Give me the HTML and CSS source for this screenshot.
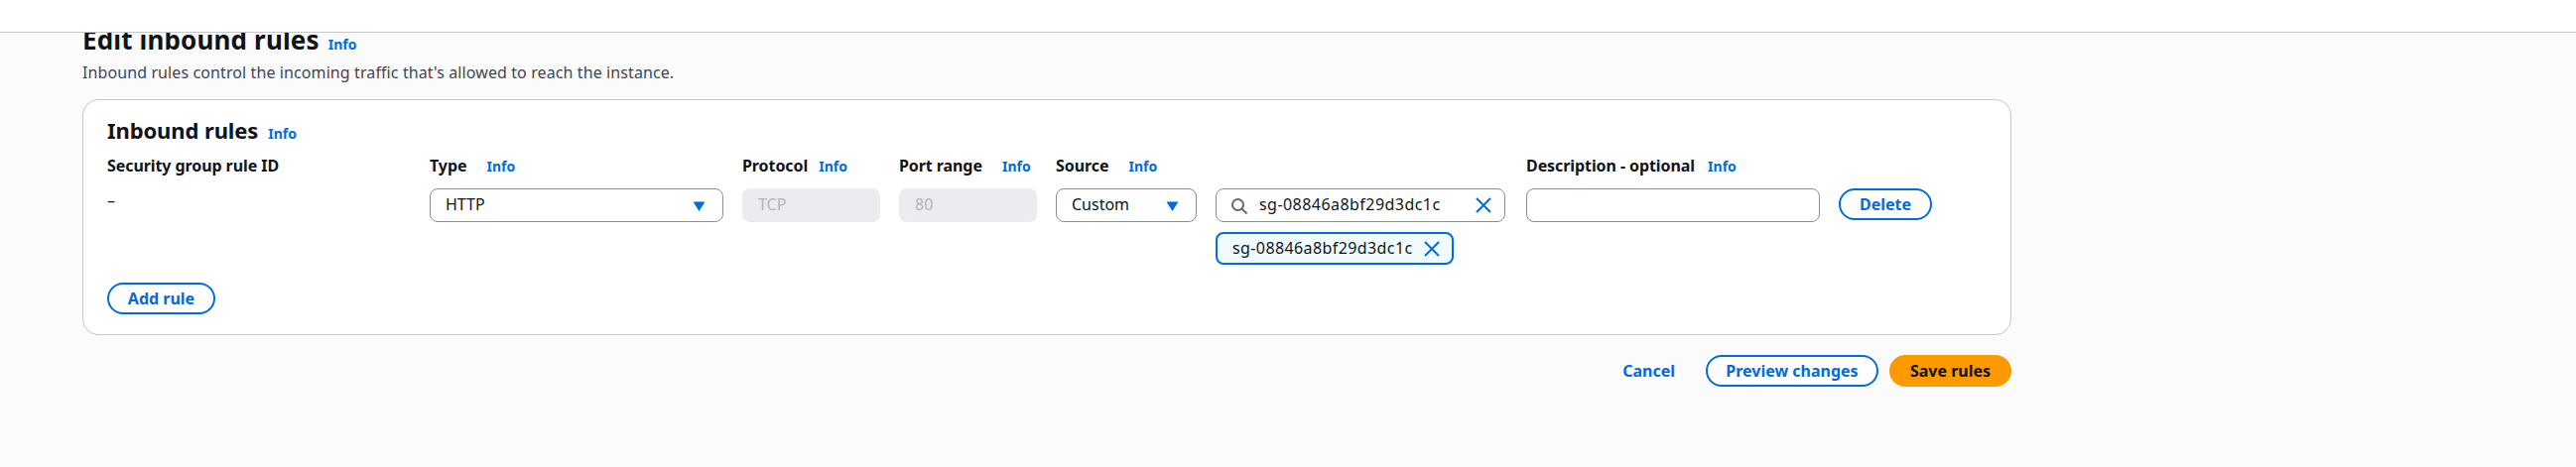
FILE: index.html
```html
<!DOCTYPE html>
<html lang="en">

<head>
    <meta charset="UTF-8">
    <meta name="viewport" content="width=device-width, initial-scale=1.0">
    <title>Edit inbound rules</title>
    <link rel="stylesheet" href="styles.css">
</head>

<body>
    <div class="topbar"></div>
    <div class="content">
        <div class="page-title">
            <h1>Edit inbound rules</h1>
            <a class="info" href="#">Info</a>
        </div>
        <p class="page-desc">Inbound rules control the incoming traffic that's allowed to reach the instance.</p>

        <div class="card">
            <div class="card-title">
                <h2>Inbound rules</h2>
                <a class="info" href="#">Info</a>
            </div>

            <div class="rule-grid">
                <div class="label">Security group rule ID</div>
                <div class="label label-gap">Type <a class="info" href="#">Info</a></div>
                <div class="label">Protocol <a class="info" href="#">Info</a></div>
                <div class="label label-gap">Port range <a class="info" href="#">Info</a></div>
                <div class="label label-gap">Source <a class="info" href="#">Info</a></div>
                <div></div>
                <div class="label label-desc">Description - optional <a class="info" href="#">Info</a></div>
                <div></div>

                <div class="dash">–</div>
                <div class="select">
                    <span>HTTP</span>
                    <svg class="caret" viewBox="0 0 12 10"><path d="M0 0.5h12L6 10z" /></svg>
                </div>
                <div class="field-disabled">TCP</div>
                <div class="field-disabled">80</div>
                <div class="select">
                    <span>Custom</span>
                    <svg class="caret" viewBox="0 0 12 10"><path d="M0 0.5h12L6 10z" /></svg>
                </div>
                <div class="source-cell">
                    <div class="search">
                        <svg class="search-icon" viewBox="0 0 18 18">
                            <circle cx="7.5" cy="7.5" r="5.5" />
                            <path d="M11.5 11.5l5 5" />
                        </svg>
                        <span class="search-text">sg-08846a8bf29d3dc1c</span>
                        <svg class="close-icon" viewBox="0 0 16 16"><path d="M1 1l14 14M15 1l-14 14" /></svg>
                    </div>
                    <div class="chip">
                        <span class="chip-text">sg-08846a8bf29d3dc1c</span>
                        <svg class="close-icon" viewBox="0 0 16 16"><path d="M1 1l14 14M15 1l-14 14" /></svg>
                    </div>
                </div>
                <div class="text-input"></div>
                <div><button class="btn btn-delete" type="button">Delete</button></div>
            </div>

            <button class="btn btn-add" type="button">Add rule</button>
        </div>

        <div class="actions">
            <a class="cancel" href="#">Cancel</a>
            <button class="btn btn-preview" type="button">Preview changes</button>
            <button class="btn btn-save" type="button">Save rules</button>
        </div>
    </div>
</body>

</html>
```

FILE: styles.css
```css
body {
    font-family: "Noto Sans", Arial, sans-serif;
    font-size: 16px;
    color: #0f141a;
    margin: 0;
    padding: 0;
    background-color: #fbfbfb;
    height: 471px;
    overflow: hidden;
}

.topbar {
    position: absolute;
    top: 0;
    left: 0;
    right: 0;
    height: 32px;
    background-color: white;
    border-bottom: 1px solid #c6c6cd;
}

.content {
    width: 1944px;
    padding: 24px 0 0 83px;
}

.page-title {
    display: flex;
    align-items: baseline;
    gap: 9px;
    height: 33px;
}

.page-title h1 {
    font-size: 26px;
    line-height: 33px;
    font-weight: 700;
    letter-spacing: 0.15px;
    margin: 0;
}

.page-desc {
    margin: 5px 0 0;
    line-height: 22px;
    letter-spacing: 0.1px;
    color: #424650;
}

.info {
    color: #006ce0;
    font-size: 14px;
    font-weight: 700;
    letter-spacing: 0;
    text-decoration: none;
}

.card {
    margin-top: 16px;
    height: 238px;
    box-sizing: border-box;
    background-color: white;
    border: 1px solid #c6c6cd;
    border-radius: 16px;
    padding: 16px 24px 0;
    position: relative;
}

.card-title {
    display: flex;
    align-items: baseline;
    gap: 10px;
}

.card-title h2 {
    font-size: 22px;
    line-height: 28px;
    font-weight: 700;
    letter-spacing: -0.1px;
    margin: 0;
}

.rule-grid {
    display: grid;
    grid-template-columns: 306px 296px 139px 139px 142px 294px 296px auto;
    column-gap: 19px;
    row-gap: 11px;
    margin-top: 11px;
}

.label {
    font-weight: 700;
    line-height: 22px;
    letter-spacing: -0.08px;
    white-space: nowrap;
}

.label .info {
    margin-left: 7px;
}

.label-gap .info {
    margin-left: 16px;
}

.label-desc .info {
    margin-left: 9px;
}

.dash {
    line-height: 22px;
    margin-top: 1px;
}

.select,
.search,
.text-input {
    box-sizing: border-box;
    height: 34px;
    background-color: white;
    border: 1px solid #8c8c94;
    border-radius: 8px;
    display: flex;
    align-items: center;
}

.select {
    justify-content: space-between;
    padding: 0 17px 2px 15px;
}

.caret {
    width: 13px;
    height: 10px;
    fill: #006ce0;
    margin-top: 4px;
}

.field-disabled {
    box-sizing: border-box;
    height: 34px;
    background-color: #ebebf0;
    border-radius: 8px;
    padding: 0 16px 2px;
    display: flex;
    align-items: center;
    color: #b4b4bb;
}

.source-cell {
    width: 292px;
}

.search {
    padding: 0 13px 2px 14px;
}

.search-icon {
    width: 18px;
    height: 18px;
    fill: none;
    stroke: #656871;
    stroke-width: 2;
    flex: none;
    margin-top: 3px;
}

.search-text {
    margin-left: 11px;
    flex: 1;
    letter-spacing: 0.45px;
}

.chip-text {
    letter-spacing: 0.4px;
}

.close-icon {
    width: 16px;
    height: 16px;
    fill: none;
    stroke: #006ce0;
    stroke-width: 2;
    flex: none;
    margin-top: 2px;
}

.chip {
    box-sizing: border-box;
    margin-top: 10px;
    width: 240px;
    height: 33px;
    background-color: #f0fbff;
    border: 2px solid #006ce0;
    border-radius: 8px;
    padding: 0 12px 2px 15px;
    display: flex;
    align-items: center;
    justify-content: space-between;
}

.btn {
    box-sizing: border-box;
    height: 32px;
    font-family: inherit;
    font-size: 16px;
    font-weight: 700;
    border-radius: 20px;
    border: 2px solid #006ce0;
    background-color: white;
    color: #006ce0;
    padding: 0;
    cursor: pointer;
}

.btn-delete {
    width: 94px;
}

.btn-add {
    position: absolute;
    left: 24px;
    bottom: 20px;
    width: 109px;
}

.actions {
    display: flex;
    justify-content: flex-end;
    align-items: center;
    margin-top: 20px;
}

.cancel {
    color: #006ce0;
    font-weight: 700;
    text-decoration: none;
    margin-right: 31px;
}

.btn-preview {
    width: 174px;
    margin-right: 11px;
}

.btn-save {
    width: 123px;
    background-color: #ff9900;
    border-color: #ff9900;
    color: #0f141a;
}
```
